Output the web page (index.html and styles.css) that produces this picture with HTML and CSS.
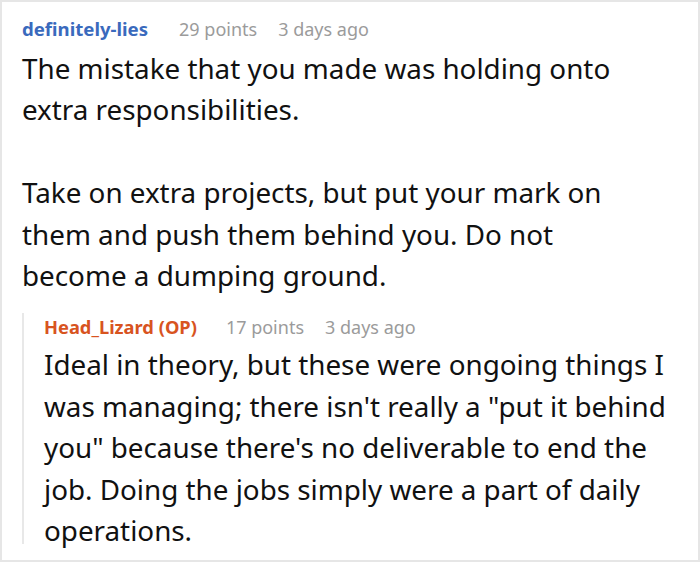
FILE: index.html
```html
<!DOCTYPE html>
<html>
<head>
<meta charset="utf-8">
<link rel="stylesheet" href="styles.css">
</head>
<body>
<div class="thread">
  <div class="comment">
    <div class="meta">
      <span class="author">definitely-lies</span>
      <span class="info">29 points</span>
      <span class="info">3 days ago</span>
    </div>
    <div class="body main-body">
      <p>The mistake that you made was holding onto extra responsibilities.</p>
      <p>Take on extra projects, but put your mark on them and push them behind you. Do not become a dumping ground.</p>
    </div>
    <div class="reply">
      <div class="meta">
        <span class="author op">Head_Lizard (OP)</span>
        <span class="info">17 points</span>
        <span class="info">3 days ago</span>
      </div>
      <div class="body">
        <p>Ideal in theory, but these were ongoing things I was managing; there isn't really a "put it behind you" because there's no deliverable to end the job. Doing the jobs simply were a part of daily operations.</p>
      </div>
    </div>
  </div>
</div>
</body>
</html>
```
FILE: styles.css
```css
html, body {
  margin: 0;
  padding: 0;
  background: #fff;
}
.thread {
  width: 700px;
  height: 562px;
  box-sizing: border-box;
  border: 2px solid #e6e6e6;
  background: #fff;
  font-family: "Noto Sans", "Open Sans", sans-serif;
  color: #111;
  overflow: hidden;
}
.comment {
  padding: 15px 26px 0 20px;
}
.meta {
  display: flex;
  align-items: baseline;
  font-size: 18px;
  line-height: 24px;
  white-space: nowrap;
}
.author {
  font-size: 18.6px;
  font-weight: 700;
  color: #3a6abd;
  margin-right: 31px;
}
.author.op {
  color: #d8541f;
  font-size: 18.3px;
  margin-right: 29px;
}
.info {
  color: #9b9b9b;
  margin-right: 21px;
}
.body {
  font-size: 27.8px;
  line-height: 41.5px;
  margin-top: 6.5px;
}
.main-body {
  padding-right: 32px;
}
.body p {
  margin: 0 0 41.5px 0;
}
.body p:last-child {
  margin-bottom: 0;
}
.reply {
  margin-top: 16px;
  height: 231px;
  box-sizing: border-box;
  border-left: 2px solid #e8e8e8;
  padding-left: 20px;
  padding-top: 2px;
}
.reply .body {
  margin-top: 5.5px;
}
```
